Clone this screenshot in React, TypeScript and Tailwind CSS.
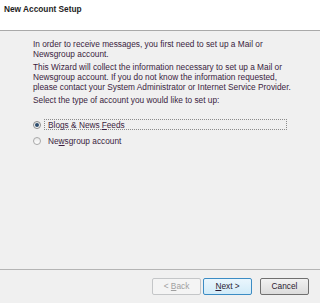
export default function App() {
  return (
    <div className="w-[320px] h-[303px] bg-[#f0f0f0] flex flex-col font-['Liberation_Sans',sans-serif] text-[#3a1d40]">
      {/* Header */}
      <div className="h-[31px] bg-white border-b border-[#a9a9a9] px-[4px] pt-[3px] shrink-0">
        <h1 className="text-[8.3px] font-bold text-[#1e1e1e] leading-[12px]">New Account Setup</h1>
      </div>

      {/* Body */}
      <div className="flex-1 pl-[33px] pr-[20px] pt-[8px] text-[8.3px] leading-[10px]">
        <p>In order to receive messages, you first need to set up a Mail or Newsgroup account.</p>
        <p className="mt-[3px]">
          This Wizard will collect the information necessary to set up a Mail or Newsgroup account. If you do not know the information requested, please contact your System Administrator or Internet Service Provider.
        </p>
        <p className="mt-[3px]">Select the type of account you would like to set up:</p>

        <div className="mt-[14px] flex flex-col gap-[6px]">
          <label className="flex items-center gap-[3px]">
            <span className="w-[8px] h-[8px] rounded-full border border-[#8a8a8a] bg-gradient-to-b from-[#e8e8e8] to-[#ffffff] flex items-center justify-center shrink-0">
              <span className="w-[4px] h-[4px] rounded-full bg-[#2d4d6e]" />
            </span>
            <span className="w-[243px] h-[11px] border border-dotted border-[#8a8a8a] px-[3px] flex items-center">
              Blogs &amp; News <span className="underline ml-[2px]">F</span>eeds
            </span>
          </label>
          <label className="flex items-center gap-[3px]">
            <span className="w-[8px] h-[8px] rounded-full border border-[#a8a8a8] bg-gradient-to-b from-[#e8e8e8] to-[#ffffff] shrink-0" />
            <span className="px-[4px]">
              Ne<span className="underline">w</span>sgroup account
            </span>
          </label>
        </div>
      </div>

      {/* Footer */}
      <div className="h-[34px] border-t border-[#b4b4b4] shrink-0 flex justify-end items-start pt-[8px] pr-[11px] gap-[2px] text-[8.3px]">
        <button className="w-[49px] h-[17px] rounded-[2px] border border-[#c4c6c8] bg-[#f4f4f4] text-[#a0a0a0]">
          &lt; <span className="underline">B</span>ack
        </button>
        <button className="w-[49px] h-[17px] rounded-[2px] border border-[#3c8cc4] bg-gradient-to-b from-[#eaf6fd] to-[#d2ebf8] text-[#2a1a30]">
          <span className="underline">N</span>ext &gt;
        </button>
        <button className="w-[49px] h-[17px] ml-[6px] rounded-[2px] border border-[#707070] bg-gradient-to-b from-[#f2f2f2] to-[#dcdcdc] text-[#2a1a30]">
          Cancel
        </button>
      </div>
    </div>
  );
}
